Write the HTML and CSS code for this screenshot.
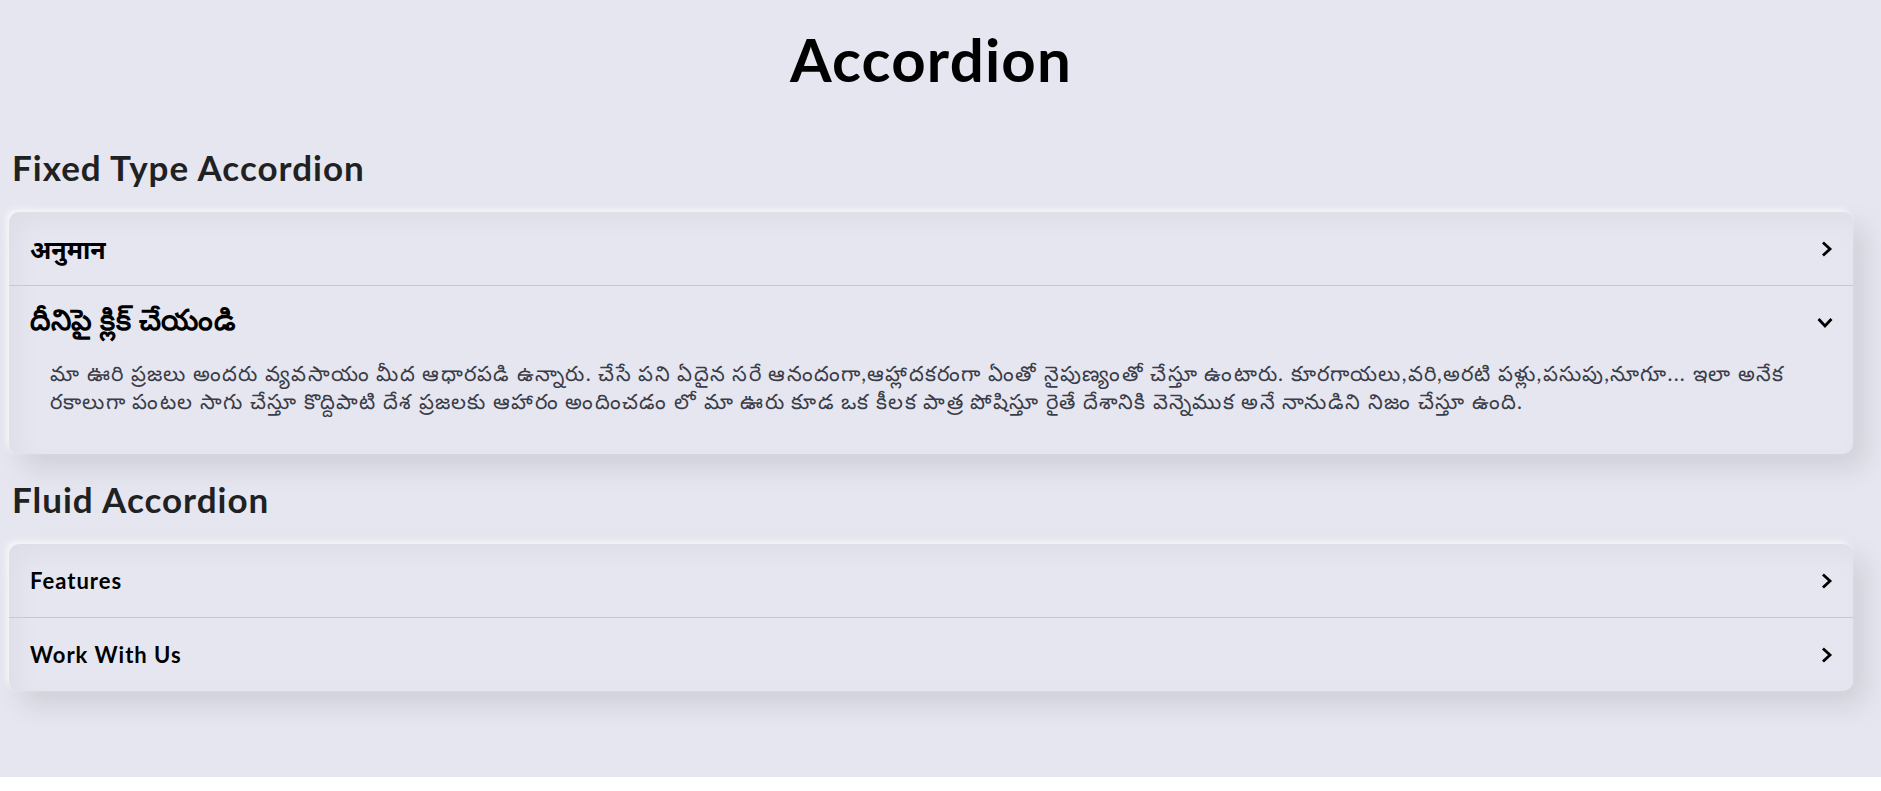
FILE: index.html
```html
<!DOCTYPE html>
<html lang="en">
<head>
<meta charset="utf-8">
<title>Accordion</title>
<link rel="stylesheet" href="styles.css">
</head>
<body>
<div class="page">
  <h1 class="title">Accordion</h1>

  <h2 class="section-title">Fixed Type Accordion</h2>
  <div class="accordion">
    <div class="item">
      <div class="item-head">
        <span class="item-label deva">अनुमान</span>
        <svg class="chev" viewBox="0 0 12 16" width="12" height="16"><polyline points="3,2.5 9,8 3,13.5" /></svg>
      </div>
    </div>
    <div class="item open">
      <div class="item-head">
        <span class="item-label telugu">దీనిపై క్లిక్ చేయండి</span>
        <svg class="chev" viewBox="0 0 16 12" width="16" height="12"><polyline points="2.5,3 8,9 13.5,3" /></svg>
      </div>
      <div class="item-body">
        <p>మా ఊరి ప్రజలు అందరు వ్యవసాయం మీద ఆధారపడి ఉన్నారు. చేసే పని ఏదైన సరే ఆనందంగా,ఆహ్లాదకరంగా ఏంతో నైపుణ్యంతో చేస్తూ ఉంటారు. కూరగాయలు,వరి,అరటి పళ్లు,పసుపు,నూగూ... ఇలా అనేక రకాలుగా పంటల సాగు చేస్తూ కొద్దిపాటి దేశ ప్రజలకు ఆహారం అందించడం లో మా ఊరు కూడ ఒక కీలక పాత్ర పోషిస్తూ రైతే దేశానికి వెన్నెముక అనే నానుడిని నిజం చేస్తూ ఉంది.</p>
      </div>
    </div>
  </div>

  <h2 class="section-title">Fluid Accordion</h2>
  <div class="accordion">
    <div class="item">
      <div class="item-head">
        <span class="item-label">Features</span>
        <svg class="chev" viewBox="0 0 12 16" width="12" height="16"><polyline points="3,2.5 9,8 3,13.5" /></svg>
      </div>
    </div>
    <div class="item">
      <div class="item-head">
        <span class="item-label">Work With Us</span>
        <svg class="chev" viewBox="0 0 12 16" width="12" height="16"><polyline points="3,2.5 9,8 3,13.5" /></svg>
      </div>
    </div>
  </div>
</div>
</body>
</html>
```

FILE: styles.css
```css
html {
  background: #ffffff;
}

body {
  margin: 0;
  font-family: "Lato", "Noto Sans", "DejaVu Sans", sans-serif;
  color: #000;
}

.page {
  background: #e5e6ef;
  min-height: 777px;
  padding: 24px 28px 1px 9px;
  box-sizing: border-box;
}

.title {
  margin: 0;
  text-align: center;
  font-size: 60px;
  line-height: 70px;
  font-weight: 700;
  letter-spacing: 1.2px;
  color: #000;
}

.section-title {
  margin: 52px 0 24px 3px;
  font-size: 35px;
  line-height: 42px;
  font-weight: 700;
  letter-spacing: 1px;
  color: #1f2123;
}

.accordion + .section-title {
  margin-top: 24px;
}

.accordion {
  background: #e5e6ef;
  border-radius: 10px;
  box-shadow:
    -3px -3px 6px rgba(255, 255, 255, 0.7),
    12px 14px 28px rgba(0, 0, 0, 0.1),
    inset 10px 10px 24px rgba(0, 0, 0, 0.035);
  overflow: hidden;
}

.item + .item {
  border-top: 1px solid #c9c9cc;
}

.item-head {
  height: 73px;
  display: flex;
  align-items: center;
  justify-content: space-between;
  padding: 0 20px 0 21px;
}

.item-label {
  font-size: 22px;
  font-weight: 700;
  letter-spacing: 1px;
  color: #000;
}

.item-label.deva {
  font-size: 25px;
  letter-spacing: 0;
}

.item-label.telugu {
  font-size: 29px;
  letter-spacing: 0.5px;
}

.chev {
  fill: none;
  stroke: #000;
  stroke-width: 2.8;
  stroke-linecap: square;
}

.item-body {
  padding: 0 40px 39px 41px;
}

.item-body p {
  margin: 0;
  font-size: 21px;
  line-height: 28px;
  letter-spacing: 1.2px;
  color: #3a3c48;
}
```
